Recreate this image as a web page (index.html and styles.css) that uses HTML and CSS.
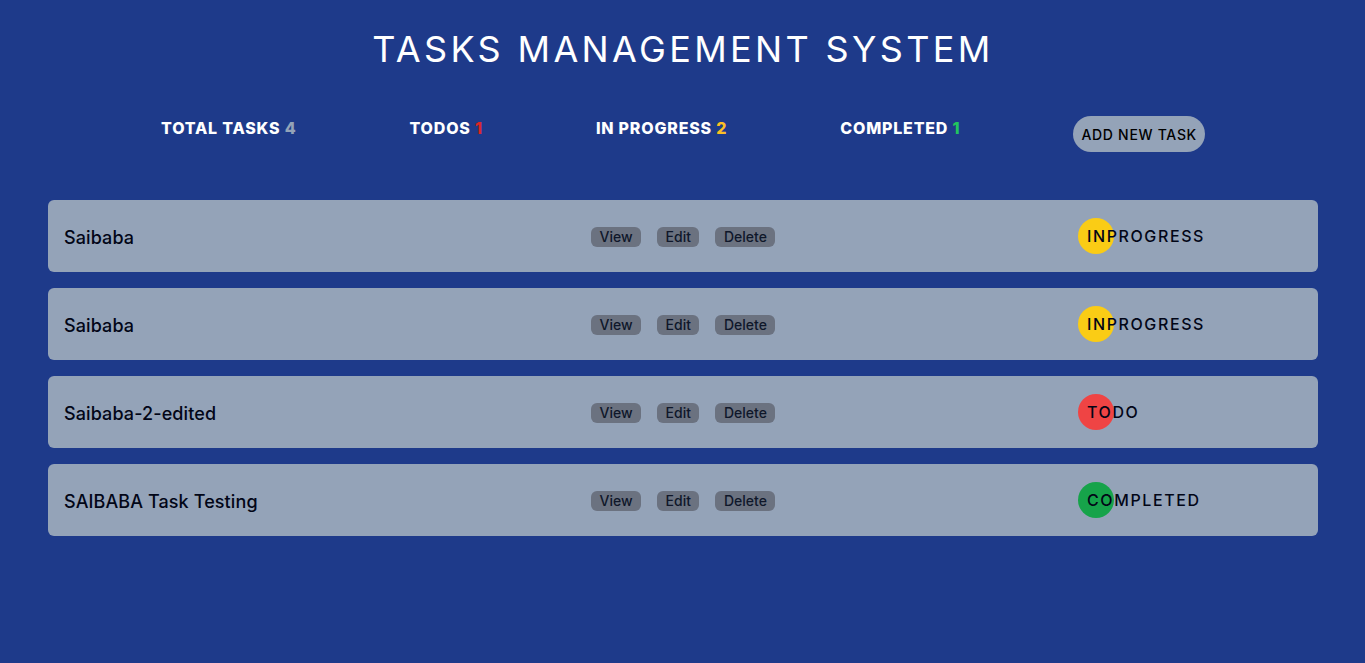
FILE: index.html
```html
<!DOCTYPE html>
<html lang="en">
<head>
<meta charset="utf-8">
<title>Tasks Management System</title>
<link rel="stylesheet" href="styles.css">
</head>
<body>
<div class="app">
  <h1 class="title">TASKS MANAGEMENT SYSTEM</h1>
  <div class="stats">
    <div class="stat">TOTAL TASKS <span class="n-total">4</span></div>
    <div class="stat">TODOS <span class="n-todo">1</span></div>
    <div class="stat">IN PROGRESS <span class="n-prog">2</span></div>
    <div class="stat">COMPLETED <span class="n-done">1</span></div>
    <button class="add-btn">ADD NEW TASK</button>
  </div>
  <div class="list">
    <div class="card">
      <div class="name">Saibaba</div>
      <div class="actions"><button class="act">View</button><button class="act">Edit</button><button class="act">Delete</button></div>
      <div class="status"><span class="dot dot-prog"></span><span class="label">INPROGRESS</span></div>
    </div>
    <div class="card">
      <div class="name">Saibaba</div>
      <div class="actions"><button class="act">View</button><button class="act">Edit</button><button class="act">Delete</button></div>
      <div class="status"><span class="dot dot-prog"></span><span class="label">INPROGRESS</span></div>
    </div>
    <div class="card">
      <div class="name">Saibaba-2-edited</div>
      <div class="actions"><button class="act">View</button><button class="act">Edit</button><button class="act">Delete</button></div>
      <div class="status"><span class="dot dot-todo"></span><span class="label">TODO</span></div>
    </div>
    <div class="card">
      <div class="name">SAIBABA Task Testing</div>
      <div class="actions"><button class="act">View</button><button class="act">Edit</button><button class="act">Delete</button></div>
      <div class="status"><span class="dot dot-done"></span><span class="label">COMPLETED</span></div>
    </div>
  </div>
</div>
</body>
</html>
```
FILE: styles.css
```css
html, body {
  margin: 0;
  padding: 0;
  background: #1e3a8a;
  font-family: Inter, "Noto Sans", sans-serif;
}
.app {
  min-height: 663px;
  padding: 0 47px 0 48px;
  box-sizing: border-box;
}
.title {
  margin: 0;
  padding-top: 29px;
  text-align: center;
  color: #ffffff;
  font-size: 36px;
  font-weight: 400;
  letter-spacing: 0.093em;
  line-height: 40px;
}
.stats {
  margin-top: 47px;
  display: flex;
  justify-content: space-evenly;
  align-items: flex-start;
}
.stat {
  color: #ffffff;
  font-weight: 800;
  font-size: 16px;
  line-height: 24px;
  letter-spacing: 0.05em;
}
.n-total { color: #94a3b8; }
.n-todo { color: #dc2626; }
.n-prog { color: #fbbf24; }
.n-done { color: #22c55e; }
.add-btn {
  border: 0;
  background: #94a3b8;
  color: #000;
  font-family: Inter, "Noto Sans", sans-serif;
  font-size: 14px;
  font-weight: 500;
  letter-spacing: 0.05em;
  height: 36px;
  padding: 0 8px;
  border-radius: 18px;
}
.list {
  margin-top: 48px;
  display: flex;
  flex-direction: column;
  gap: 16px;
}
.card {
  background: #94a3b8;
  border-radius: 6px;
  height: 72px;
  padding: 0 16px;
  display: grid;
  grid-template-columns: 527px 487px 1fr;
  align-items: center;
}
.name {
  font-size: 18px;
  font-weight: 500;
  letter-spacing: 0.1px;
  color: #020617;
  padding-top: 2px;
}
.actions {
  display: flex;
  gap: 16px;
  padding-top: 2px;
}
.act {
  border: 0;
  background: #6b7280;
  color: #0f172a;
  font-family: Inter, "Noto Sans", sans-serif;
  font-size: 14px;
  font-weight: 500;
  height: 20px;
  line-height: 20px;
  padding: 0 8.5px;
  border-radius: 6px;
}
.status {
  display: flex;
  align-items: center;
}
.dot {
  width: 36px;
  height: 36px;
  border-radius: 50%;
  flex: none;
}
.dot-prog { background: #facc15; }
.dot-todo { background: #ef4444; }
.dot-done { background: #16a34a; }
.label {
  margin-left: -27px;
  font-size: 16px;
  font-weight: 500;
  letter-spacing: 0.1em;
  color: #020617;
  position: relative;
}
```
